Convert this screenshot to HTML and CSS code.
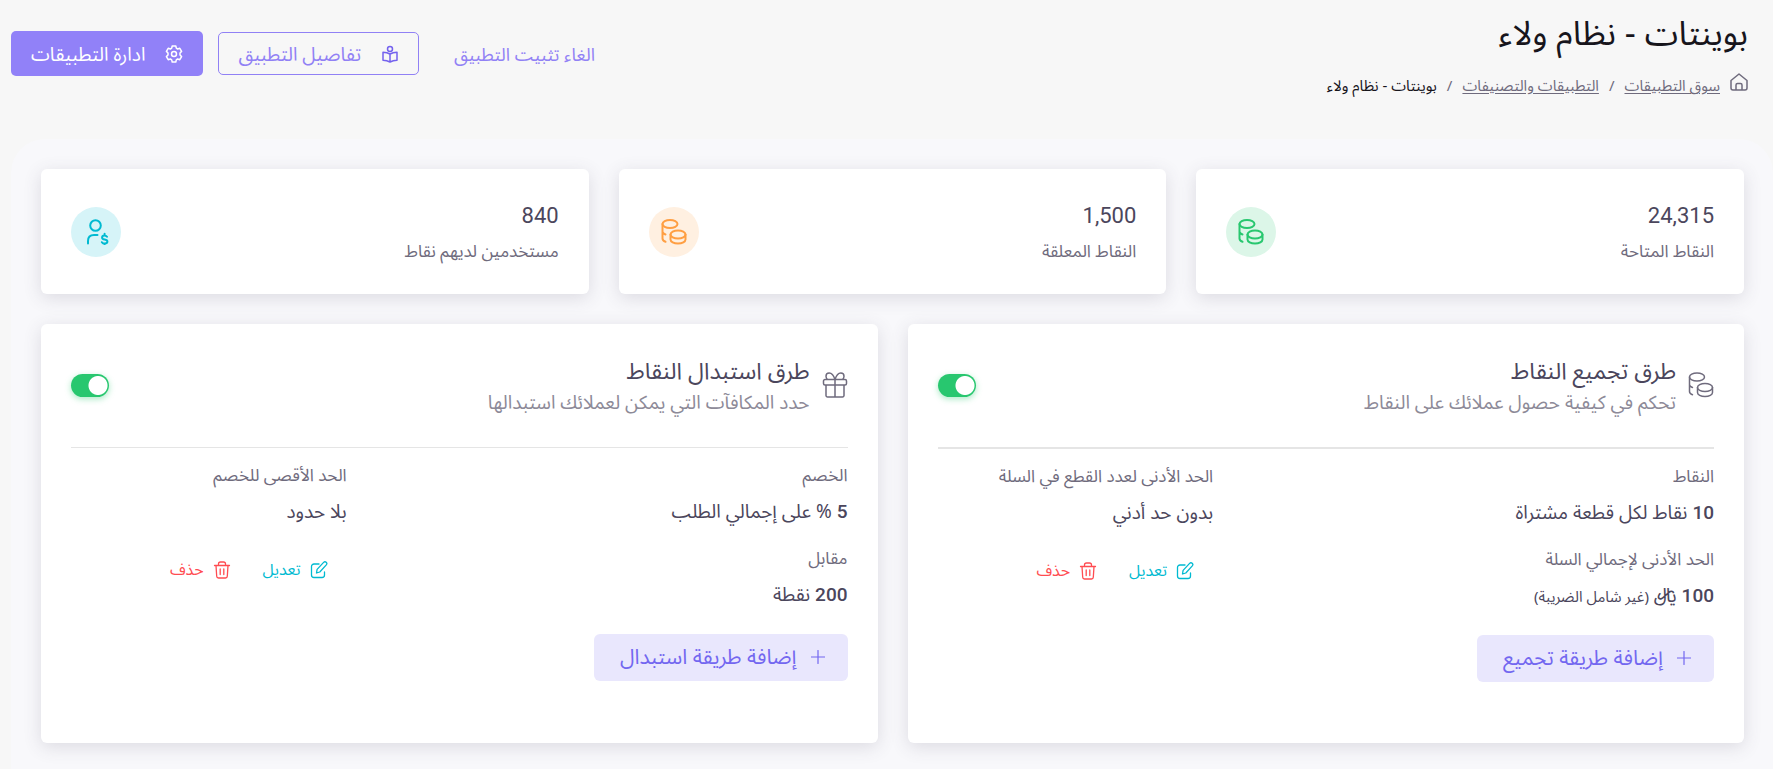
FILE: index.html
```html
<!DOCTYPE html>
<html lang="ar" dir="rtl">
<head>
<meta charset="utf-8">
<title>بوينتات - نظام ولاء</title>
<link rel="stylesheet" href="styles.css">
</head>
<body>
<svg class="sprite" aria-hidden="true">
  <symbol id="coins" viewBox="0 0 26 26">
    <ellipse cx="9" cy="5" rx="7.500" ry="4"/>
    <path d="M1.500 5v14.500c0 1.500 1 2.500 3 3.300M1.500 12.500c0 1.500 1 2.200 3 3"/>
    <ellipse cx="17" cy="15.500" rx="7.500" ry="4"/>
    <path d="M9.500 15.500v5c0 2.200 3.300 4 7.500 4s7.500-1.800 7.500-4v-5"/>
  </symbol>
  <symbol id="edit" viewBox="0 0 18 18">
    <path d="M9 3H4a2.500 2.500 0 0 0-2.500 2.500V14A2.500 2.500 0 0 0 4 16.500h8a2.500 2.500 0 0 0 2.500-2.500v-3"/>
    <path d="M6.500 12l.6-3.600 6.500-7a1.800 1.800 0 0 1 2.700 2.500L9.800 11z"/>
  </symbol>
  <symbol id="trash" viewBox="0 0 18 18">
    <path d="M1.500 4.500h15M5.500 4.500V3a2 2 0 0 1 2-2h3a2 2 0 0 1 2 2v1.500M3 4.500l.7 10.800A1.800 1.800 0 0 0 5.500 17h7a1.800 1.800 0 0 0 1.800-1.700L15 4.500M7.200 8v5.500M10.800 8v5.500"/>
  </symbol>
  <symbol id="plus" viewBox="0 0 14 14"><path d="M7 .5v13M.5 7h13"/></symbol>
</svg>

<header class="page-header">
  <div class="heading">
    <h1 class="title">بوينتات - نظام ولاء</h1>
    <nav class="crumbs">
      <svg class="home" viewBox="0 0 18 18"><path d="M1 7.500L9 1l8 6.500V15a2 2 0 0 1-2 2H3a2 2 0 0 1-2-2zM6 17v-5a1.500 1.500 0 0 1 1.500-1.500h3A1.500 1.500 0 0 1 12 12v5"/></svg>
      <a href="#">سوق التطبيقات</a>
      <span class="sep">/</span>
      <a href="#">التطبيقات والتصنيفات</a>
      <span class="sep">/</span>
      <span class="current">بوينتات - نظام ولاء</span>
    </nav>
  </div>
  <div class="actions">
    <button class="btn btn-text">الغاء تثبيت التطبيق</button>
    <button class="btn btn-outline">
      <svg class="btn-icon" viewBox="0 0 18 18"><circle cx="9" cy="4" r="2.500"/><path d="M9 9v8M9 9C7 7.700 5 7.200 2 7.200v8c3 0 5 .6 7 1.800 2-1.200 4-1.800 7-1.800v-8c-3 0-5 .5-7 1.800"/></svg>
      تفاصيل التطبيق
    </button>
    <button class="btn btn-primary">
      <svg class="btn-icon" viewBox="0 0 18 18"><circle cx="9" cy="9" r="2.500"/><path d="M7.200 1h3.600l.5 2.200 1.300.8 2.200-.7 1.800 3.100L15 8v2l1.600 1.600-1.800 3.100-2.200-.7-1.300.8-.5 2.200H7.200l-.5-2.200-1.300-.8-2.200.7-1.800-3.100L3 10V8L1.400 6.400l1.800-3.100 2.200.7 1.300-.8z"/></svg>
      ادارة التطبيقات
    </button>
  </div>
</header>

<main class="panel">
  <section class="stats">
    <article class="card stat">
      <div class="stat-text"><p class="stat-value">24,315</p><p class="stat-label">النقاط المتاحة</p></div>
      <span class="badge badge-green"><svg class="icon-26"><use href="#coins"/></svg></span>
    </article>
    <article class="card stat">
      <div class="stat-text"><p class="stat-value">1,500</p><p class="stat-label">النقاط المعلقة</p></div>
      <span class="badge badge-orange"><svg class="icon-26"><use href="#coins"/></svg></span>
    </article>
    <article class="card stat">
      <div class="stat-text"><p class="stat-value">840</p><p class="stat-label">مستخدمين لديهم نقاط</p></div>
      <span class="badge badge-cyan"><svg class="icon-26" viewBox="0 0 26 26"><ellipse cx="12.500" cy="6.500" rx="5.300" ry="5.300"/><path d="M5 24.500V22c0-4 2.500-6 6-6h3.500M24 17.800c-.7-1-1.500-1.300-2.500-1.300-1.500 0-2.400.8-2.400 1.900 0 1.200 1 1.800 2.600 2 1.700.3 2.700 1 2.700 2.200s-1.100 2-2.700 2c-1.300 0-2.200-.5-2.800-1.400M21.600 14.800v1.500M21.600 24.700v1.300"/></svg></span>
    </article>
  </section>

  <section class="methods">
    <article class="card method">
      <div class="method-head">
        <svg class="icon-26 head-icon"><use href="#coins"/></svg>
        <div class="method-text">
          <h2 class="method-title">طرق تجميع النقاط</h2>
          <p class="method-sub">تحكم في كيفية حصول عملائك على النقاط</p>
        </div>
        <input type="checkbox" class="toggle" checked aria-label="طرق تجميع النقاط">
      </div>
      <hr class="rule rule-thick">
      <div class="details">
        <div class="field"><p class="label">النقاط</p><p class="value"><b>10</b> نقاط لكل قطعة مشتراة</p></div>
        <div class="field"><p class="label">الحد الأدنى لعدد القطع في السلة</p><p class="value">بدون حد أدني</p></div>
        <div class="field"><p class="label">الحد الأدنى لإجمالي السلة</p><p class="value"><b>100</b> ﷼ <small>(غير شامل الضريبة)</small></p></div>
        <div class="row-actions">
          <button class="link edit"><svg class="icon-18"><use href="#edit"/></svg>تعديل</button>
          <button class="link delete"><svg class="icon-18"><use href="#trash"/></svg>حذف</button>
        </div>
      </div>
      <button class="add"><svg class="icon-14"><use href="#plus"/></svg>إضافة طريقة تجميع</button>
    </article>

    <article class="card method">
      <div class="method-head">
        <svg class="icon-26 head-icon" viewBox="0 0 26 26"><path d="M3 7.500h20a1.500 1.500 0 0 1 1.500 1.500v2.500A1.500 1.500 0 0 1 23 13H3a1.500 1.500 0 0 1-1.500-1.500V9A1.500 1.500 0 0 1 3 7.500zM4 13v10.500A1.500 1.500 0 0 0 5.500 25h15a1.500 1.500 0 0 0 1.500-1.500V13M13 7.500V25M13 7.500C11.500 3 9.500 1 7.200 1 5.200 1 4 2.500 4 4.200c0 1.300.6 2.500 1.500 3.300M13 7.500C14.500 3 16.500 1 18.800 1 20.800 1 22 2.500 22 4.200c0 1.300-.6 2.500-1.500 3.300"/></svg>
        <div class="method-text">
          <h2 class="method-title">طرق استبدال النقاط</h2>
          <p class="method-sub">حدد المكافآت التي يمكن لعملائك استبدالها</p>
        </div>
        <input type="checkbox" class="toggle" checked aria-label="طرق استبدال النقاط">
      </div>
      <hr class="rule">
      <div class="details">
        <div class="field"><p class="label">الخصم</p><p class="value"><b>5</b> % على إجمالي الطلب</p></div>
        <div class="field"><p class="label">الحد الأقصى للخصم</p><p class="value">بلا حدود</p></div>
        <div class="field"><p class="label">مقابل</p><p class="value"><b>200</b> نقطة</p></div>
        <div class="row-actions">
          <button class="link edit"><svg class="icon-18"><use href="#edit"/></svg>تعديل</button>
          <button class="link delete"><svg class="icon-18"><use href="#trash"/></svg>حذف</button>
        </div>
      </div>
      <button class="add"><svg class="icon-14"><use href="#plus"/></svg>إضافة طريقة استبدال</button>
    </article>
  </section>
</main>
</body>
</html>
```
FILE: styles.css
```css
* { box-sizing: border-box; }
body {
  margin: 0;
  background: #f7f7f7;
  color: #4b465c;
  font-family: "Noto Sans", "Noto Sans Arabic", "DejaVu Sans", sans-serif;
  font-size: 16px;
}
h1, h2, p { margin: 0; font-weight: 400; }
button { font: inherit; border: 0; background: none; cursor: pointer; }
svg { fill: none; stroke: currentColor; stroke-width: 1.5; stroke-linecap: round; stroke-linejoin: round; flex: none; }
.sprite { display: none; }
b { font-weight: 500; }

.page-header { display: flex; justify-content: space-between; align-items: flex-start; padding: 8px 25px 0 11px; min-height: 139px; }
.title { font-size: 34px; line-height: 48px; color: #17151c; }
.crumbs { display: flex; align-items: flex-start; gap: 10px; font-size: 15px; line-height: 24px; margin-top: 17px; color: #6f6b7d; }
.crumbs a { color: #6f6b7d; text-underline-offset: 2px; }
.crumbs .current { color: #17151c; }
.home { width: 18px; height: 18px; }
.actions { display: flex; align-items: center; gap: 15px; padding-top: 23px; }
.btn { display: flex; align-items: center; gap: 20px; height: 43px; padding: 0 19px; border-radius: 5px; font-size: 19px; line-height: 24px; color: #9181f5; white-space: nowrap; }
.btn-text { padding: 0 20px; font-size: 18px; }
.btn-outline { border: 1px solid #9181f5; }
.btn-outline .btn-icon { color: #7462ee; }
.btn-primary { height: 45px; padding: 0 20px; background: #9181f8; color: #fff; }
.btn-icon { width: 18px; height: 18px; }

.panel { margin-left: 11px; padding: 30px 29px 26px 30px; background: #f8f8fb; border-radius: 34px 34px 0 0; }
.card { background: #fff; border-radius: 6px; box-shadow: 0 4px 18px rgba(75, 70, 92, .16); }
.stats { display: grid; grid-template-columns: repeat(3, 1fr); gap: 30px; }
.stat { display: flex; align-items: center; justify-content: space-between; padding: 0 30px; min-height: 125px; }
.stat-text { padding-top: 5px; }
.stat-value { font-family: Roboto, "Noto Sans", sans-serif; font-size: 22px; line-height: 34px; }
.stat-label { font-size: 17px; line-height: 36px; color: #6f6b7d; }
.badge { display: grid; place-items: center; width: 50px; height: 50px; border-radius: 50%; }
.badge svg { stroke-width: 2; }
.badge-green { background: #dcf6e8; color: #28c76f; }
.badge-orange { background: #fff0e1; color: #ff9f43; }
.badge-cyan { background: #d6f4f8; color: #00bad1; }
.icon-26 { width: 26px; height: 26px; }
.icon-18 { width: 18px; height: 18px; stroke-width: 1.3; }
.icon-14 { width: 14px; height: 14px; stroke-width: 1.2; }

.methods { display: grid; grid-template-columns: 1fr 1fr; gap: 30px; margin-top: 30px; }
.method { display: flex; flex-direction: column; align-items: stretch; padding: 30px; min-height: 419px; }
.method-head { display: flex; align-items: center; gap: 12px; height: 62px; }
.head-icon { color: #6f6b7d; }
.method-text { flex: 1; }
.method-title { font-size: 23px; line-height: 33px; }
.method-sub { font-size: 19px; line-height: 30px; color: #8d8a98; }
.toggle { appearance: none; margin: 0; width: 38px; height: 23px; border-radius: 12px; background: radial-gradient(circle at 27px 50%, #fff 9px, #28c76f 10px); box-shadow: 0 2px 6px rgba(40, 199, 111, .4); }
.rule { width: 100%; height: 1px; margin: 31px 0 9px; border: 0; background: #e5e5e5; }
.rule-thick { height: 2px; }
.details { display: grid; grid-template-columns: 129fr 71fr; row-gap: 10px; }
.label { font-size: 17px; line-height: 36px; color: #6f6b7d; }
.value { font-size: 19px; line-height: 36px; }
.value b { font-family: Roboto, "Noto Sans", sans-serif; }
.value small { font-size: 15px; }
.row-actions { display: flex; align-items: center; gap: 32px; height: 60px; padding-right: 19px; }
.link { display: flex; align-items: center; gap: 9px; padding: 0; font-size: 16px; }
.edit { color: #00bad1; }
.delete { color: #ff4c51; }
.add { display: flex; align-items: center; gap: 14px; align-self: flex-start; height: 47px; margin-top: 21px; padding: 0 23px 2px 26px; border-radius: 6px; background: #e9e7fd; color: #7367f0; font-size: 21px; }
```
